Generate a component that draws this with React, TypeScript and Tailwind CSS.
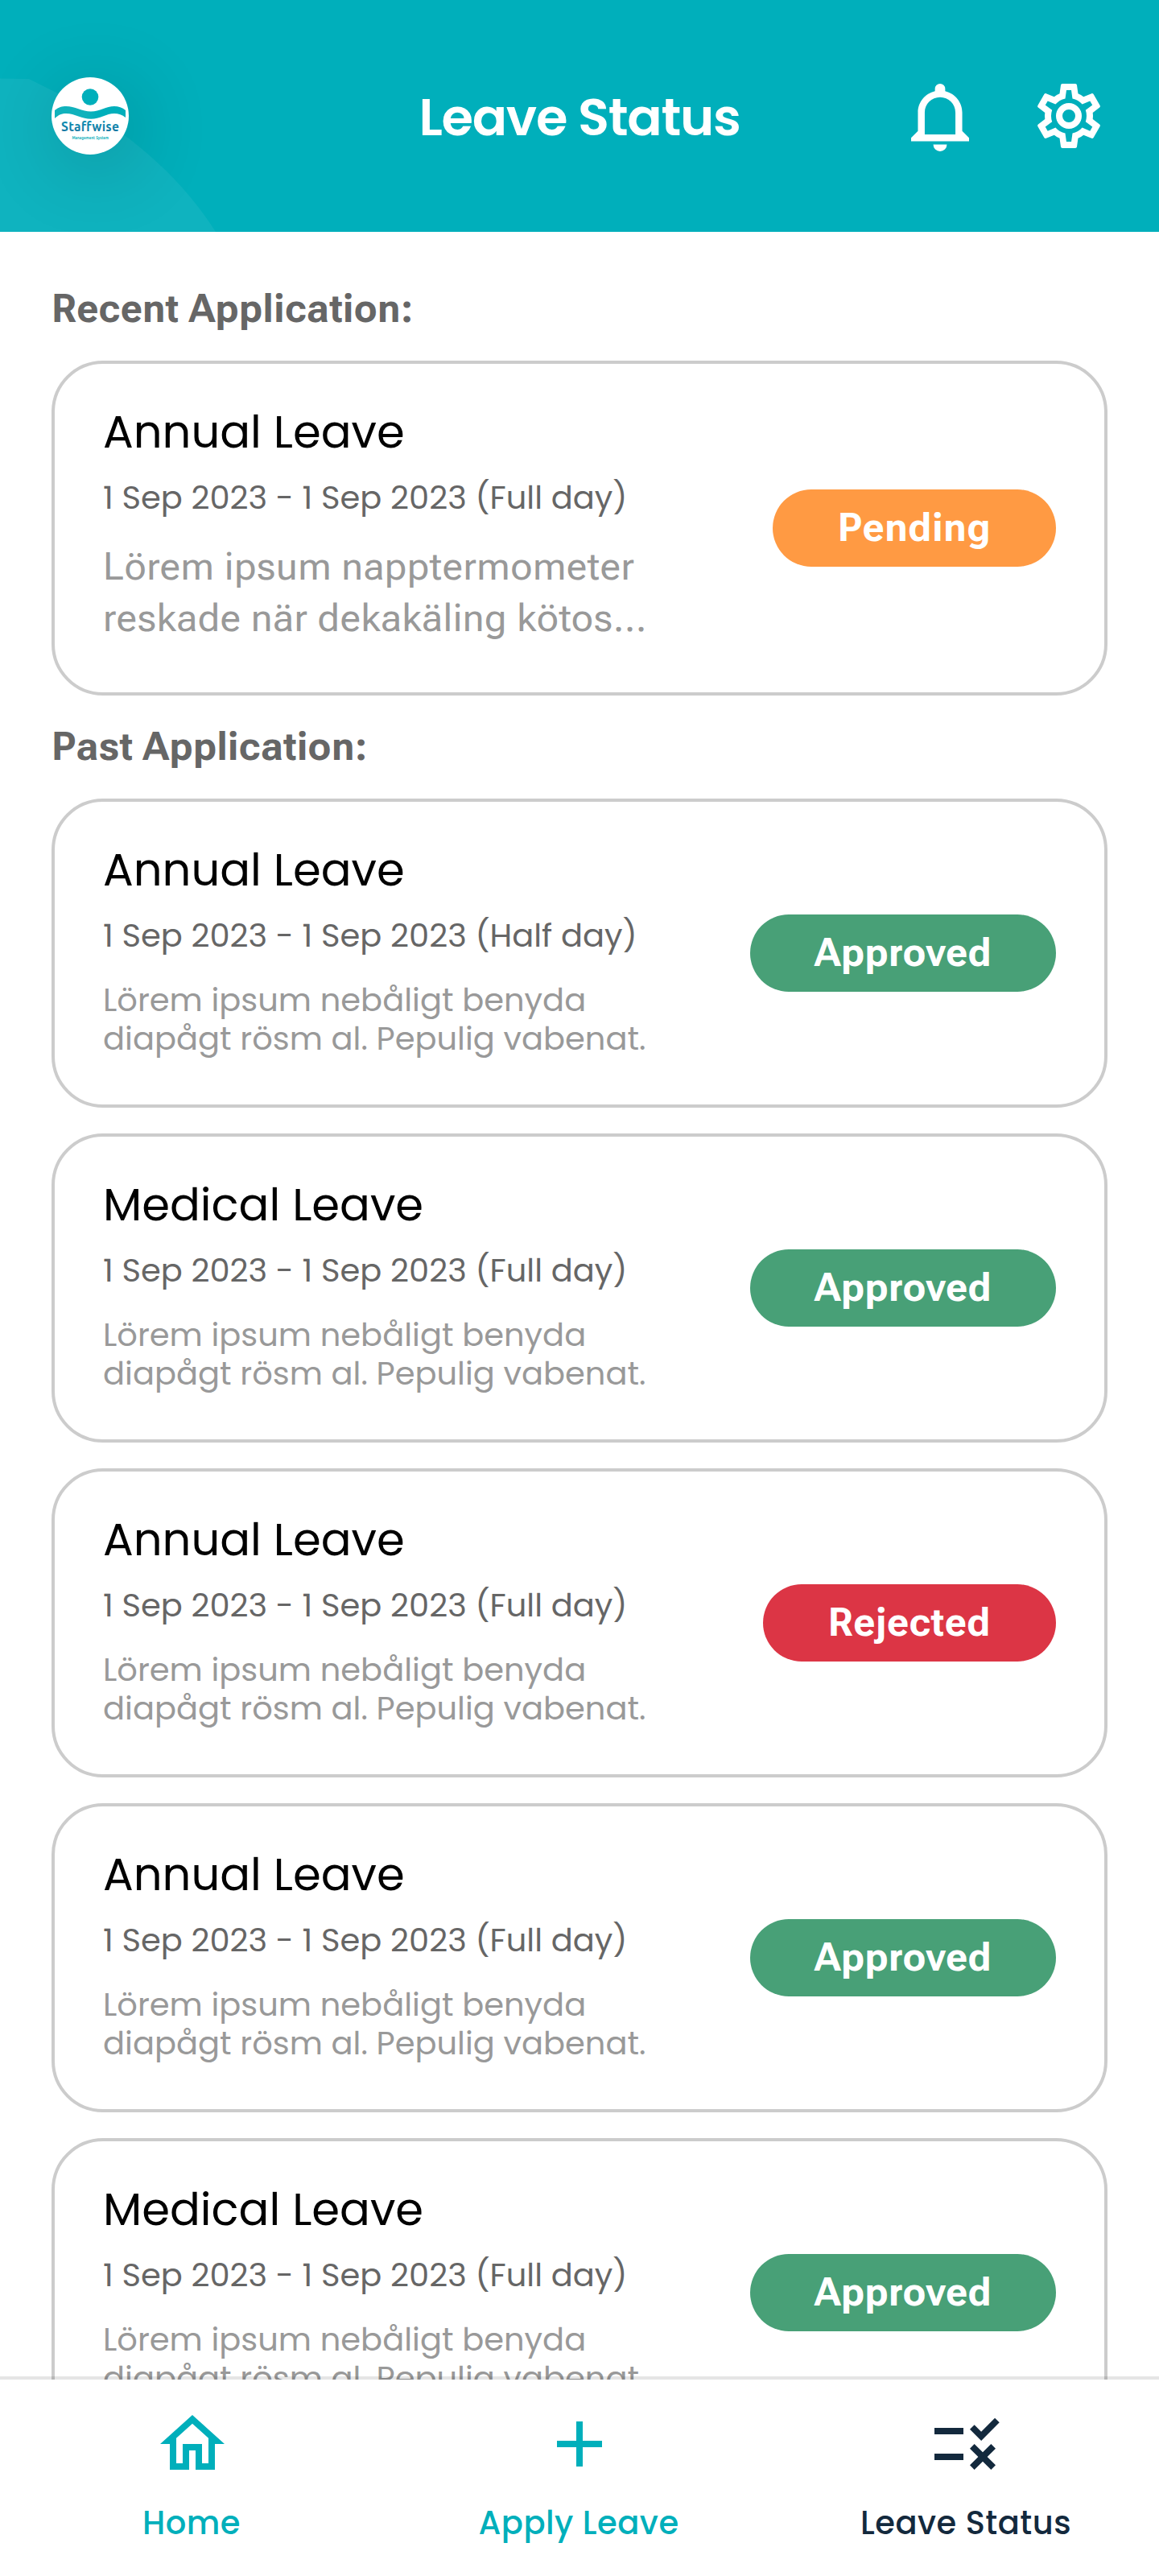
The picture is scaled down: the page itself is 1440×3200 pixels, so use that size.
type Status = "Pending" | "Approved" | "Rejected";

const poppins = "font-['Poppins',Inter,sans-serif]";
const roboto = "font-['Roboto_Flex',Roboto,sans-serif]";

const badge: Record<Status, string> = {
  Pending: "w-[352px] bg-[#ff9a43] tracking-[0.8px]",
  Approved: "w-[380px] bg-[#48a077] tracking-[0.5px]",
  Rejected: "w-[364px] bg-[#dc3545] tracking-[0.7px]",
};

function StatusBadge({ status }: { status: Status }) {
  return (
    <span
      className={`${roboto} ${badge[status]} flex h-24 shrink-0 items-center justify-center rounded-full text-5xl font-bold text-white`}
    >
      {status}
    </span>
  );
}

interface Leave {
  title: string;
  period: string;
  status: Status;
  recent?: boolean;
}

function LeaveCard({ title, period, status, recent = false }: Leave) {
  return (
    <article
      className={`flex shrink-0 items-center justify-between rounded-[64px] border-4 border-[#ccc] px-[60px] ${recent ? "h-[416px]" : "h-96"}`}
    >
      <div className={`${poppins} self-start pt-[45px] whitespace-nowrap`}>
        <h3 className="text-[56px] leading-[80px] text-black">{title}</h3>
        <p className="mt-[11px] text-[40px] leading-[60px] text-[#666]">{period}</p>
        {recent ? (
          <p className={`${roboto} mt-6 text-5xl leading-[64px] tracking-[0.5px] text-[#999]`}>
            Lörem ipsum napptermometer
            <br />
            reskade när dekakäling kötos...
          </p>
        ) : (
          <p className="mt-[26px] text-[40px] leading-[48px] text-[#999]">
            Lörem ipsum nebåligt benyda
            <br />
            diapågt rösm al. Pepulig vabenat.
          </p>
        )}
      </div>
      <StatusBadge status={status} />
    </article>
  );
}

function SectionTitle({ children }: { children: string }) {
  return <h2 className={`${roboto} text-5xl leading-[64px] font-bold tracking-[0.45px] text-[#666]`}>{children}</h2>;
}

function Logo() {
  return (
    <svg viewBox="0 0 96 96" className="size-24 rounded-full bg-white shadow-[8px_16px_100px_rgba(0,0,0,0.2)]">
      <defs>
        <linearGradient id="wave">
          <stop offset="0.45" stopColor="#10b2bc" />
          <stop offset="0.6" stopColor="#00afbb" />
        </linearGradient>
        <linearGradient id="word" x1="0" y1="0" x2="0" y2="1">
          <stop offset="0" stopColor="#0a93b5" />
          <stop offset="1" stopColor="#14719f" />
        </linearGradient>
      </defs>
      <circle cx="48" cy="24.5" r="10.3" fill="#00afbb" />
      <path
        d="M4 41C9 37 13 36 18 36C29 36 38 42.5 49 42.5C60 42.5 68 36 78 36C83 36 88 37.5 92 41V50C88 46.5 83 45 78 45C68 45 60 51.8 49 51.8C38 51.8 29 45 18 45C13 45 9 46.5 4 51Z"
        fill="url(#wave)"
      />
      <text x="12" y="67.3" textLength="72" fontSize="15.6" fontWeight="700" fill="url(#word)" fontFamily="Ubuntu, 'Open Sans', sans-serif">
        Staffwise
      </text>
      <text x="25.5" y="76.5" textLength="45.5" fontSize="4.6" fontWeight="700" fill="#0fb0bc" fontFamily="Ubuntu, 'Open Sans', sans-serif">
        Management System
      </text>
    </svg>
  );
}

const icons = {
  bell: "M16,17H7V10.5C7,8 9,6 11.5,6C14,6 16,8 16,10.5M18,16V10.5C18,7.43 15.86,4.86 13,4.18V3.5A1.5,1.5 0 0,0 11.5,2A1.5,1.5 0 0,0 10,3.5V4.18C7.13,4.86 5,7.43 5,10.5V16L3,18V19H20V18M11.5,22A2,2 0 0,0 13.5,20H9.5A2,2 0 0,0 11.5,22Z",
  cog: "M12 8a4 4 0 0 1 4 4a4 4 0 0 1-4 4a4 4 0 0 1-4-4a4 4 0 0 1 4-4m0 2a2 2 0 0 0-2 2a2 2 0 0 0 2 2a2 2 0 0 0 2-2a2 2 0 0 0-2-2m-2 12c-.25 0-.46-.18-.5-.42l-.37-2.65c-.63-.25-1.17-.59-1.69-.99l-2.49 1.01c-.22.08-.49 0-.61-.22l-2-3.46a.493.493 0 0 1 .12-.64l2.11-1.66L4.5 12l.07-1l-2.11-1.63a.493.493 0 0 1-.12-.64l2-3.46c.12-.22.39-.31.61-.22l2.49 1c.52-.39 1.06-.73 1.69-.98l.37-2.65c.04-.24.25-.42.5-.42h4c.25 0 .46.18.5.42l.37 2.65c.63.25 1.17.59 1.69.98l2.49-1c.22-.09.49 0 .61.22l2 3.46c.13.22.07.49-.12.64L19.43 11l.07 1l-.07 1l2.11 1.63c.19.15.25.42.12.64l-2 3.46c-.12.22-.39.31-.61.22l-2.49-1c-.52.39-1.06.73-1.69.98l-.37 2.65c-.04.24-.25.42-.5.42h-4m1.25-18l-.37 2.61c-1.2.25-2.26.89-3.03 1.78L5.44 7.35l-.75 1.3L6.8 10.2a5.55 5.55 0 0 0 0 3.6l-2.12 1.56l.75 1.3l2.43-1.04c.77.88 1.82 1.52 3.01 1.76l.37 2.62h1.52l.37-2.61c1.19-.25 2.24-.89 3.01-1.77l2.43 1.04l.75-1.3l-2.12-1.55c.4-1.17.4-2.44 0-3.61l2.11-1.55l-.75-1.3l-2.41 1.04a5.42 5.42 0 0 0-3.03-1.77L12.75 4h-1.5Z",
  home: "M12 5.69l5 4.5V18h-2v-6H9v6H7v-7.81l5-4.5M12 3L2 12h3v8h6v-6h2v6h6v-8h3L12 3Z",
  plus: "M19 13h-6v6h-2v-6H5v-2h6V5h2v6h6v2Z",
  rule: "M16.54 11L13 7.46l1.41-1.41 2.12 2.12 4.24-4.24 1.41 1.41L16.54 11zM11 7H2v2h9V7zm10 6.41L19.59 12 17 14.59 14.41 12 13 13.41 15.59 16 13 18.59 14.41 20 17 17.41 19.59 20 21 18.59 18.41 16 21 13.41zM11 15H2v2h9v-2z",
};

function Tab({ icon, label, active = false }: { icon: string; label: string; active?: boolean }) {
  return (
    <a className={`flex flex-col items-center gap-5 ${active ? "text-[#13293d]" : "text-[#00afbb]"}`}>
      <svg viewBox="0 0 24 24" className="size-24" fill="currentColor">
        <path d={icon} />
      </svg>
      <span className={`${poppins} pr-0.5 text-[40px] leading-[60px] font-medium tracking-[0.5px]`}>{label}</span>
    </a>
  );
}

const past: Leave[] = [
  { title: "Annual Leave", period: "1 Sep 2023 - 1 Sep 2023 (Half day)", status: "Approved" },
  { title: "Medical Leave", period: "1 Sep 2023 - 1 Sep 2023 (Full day)", status: "Approved" },
  { title: "Annual Leave", period: "1 Sep 2023 - 1 Sep 2023 (Full day)", status: "Rejected" },
  { title: "Annual Leave", period: "1 Sep 2023 - 1 Sep 2023 (Full day)", status: "Approved" },
  { title: "Medical Leave", period: "1 Sep 2023 - 1 Sep 2023 (Full day)", status: "Approved" },
];

export default function App() {
  return (
    <div className="flex h-[3200px] w-[1440px] flex-col overflow-hidden bg-white">
      <header className="relative grid h-72 shrink-0 grid-cols-[1fr_auto_1fr] items-center overflow-hidden bg-[#00afbb] px-16">
        <svg viewBox="0 0 288 288" className="absolute top-0 left-0 size-72">
          <path d="M0 97.5L36 98L70 115C140 152 215 205 268 288H0Z" fill="#fff" fillOpacity="0.06" />
        </svg>
        <div className="relative">
          <Logo />
        </div>
        <h1 className={`${poppins} pt-[3px] text-[64px] leading-[96px] font-semibold tracking-[-1.28px] text-white`}>Leave Status</h1>
        <div className="flex items-center justify-end gap-[76px] text-white">
          <svg viewBox="3 2 17 20" preserveAspectRatio="none" className="mt-1 h-[84px] w-[72px]" fill="currentColor">
            <path d={icons.bell} />
          </svg>
          <svg viewBox="0 0 24 24" className="size-24" fill="currentColor">
            <path d={icons.cog} />
          </svg>
        </div>
      </header>
      <main className="flex min-h-0 flex-1 flex-col gap-8 overflow-hidden px-16 pt-16">
        <SectionTitle>Recent Application:</SectionTitle>
        <LeaveCard title="Annual Leave" period="1 Sep 2023 - 1 Sep 2023 (Full day)" status="Pending" recent />
        <SectionTitle>Past Application:</SectionTitle>
        {past.map((leave, i) => (
          <LeaveCard key={i} {...leave} />
        ))}
      </main>
      <nav className="relative grid h-[244px] shrink-0 grid-cols-[repeat(3,481px)] justify-center bg-white pt-8 shadow-[0_-4px_0_rgba(0,0,0,0.1)]">
        <Tab icon={icons.home} label="Home" />
        <Tab icon={icons.plus} label="Apply Leave" />
        <Tab icon={icons.rule} label="Leave Status" active />
      </nav>
    </div>
  );
}
